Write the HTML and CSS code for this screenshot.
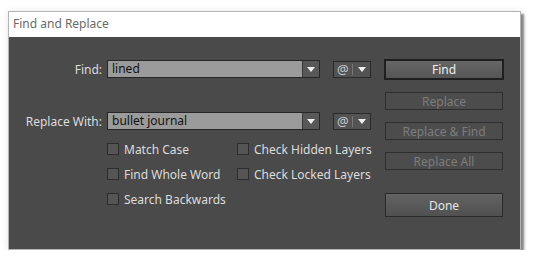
FILE: index.html
```html
<!DOCTYPE html>
<html lang="en">
    <head>
        <title>Find and Replace</title>
        <meta charset="utf-8" />
        <link rel="stylesheet" href="styles.css">
    </head>
    <body>
        <div class="window">
            <div class="titlebar">Find and Replace</div>
            <div class="content">
                <div class="form">
                    <div class="row">
                        <label class="label">Find:</label>
                        <div class="combo">
                            <span class="value">lined</span>
                            <span class="arrow"><i class="tri"></i></span>
                        </div>
                        <div class="special">
                            <span class="at">@</span>
                            <span class="sep"></span>
                            <i class="tri"></i>
                        </div>
                    </div>
                    <div class="row second">
                        <label class="label">Replace With:</label>
                        <div class="combo">
                            <span class="value">bullet journal</span>
                            <span class="arrow"><i class="tri"></i></span>
                        </div>
                        <div class="special">
                            <span class="at">@</span>
                            <span class="sep"></span>
                            <i class="tri"></i>
                        </div>
                    </div>
                    <div class="options">
                        <div class="col">
                            <div class="check"><span class="box"></span>Match Case</div>
                            <div class="check"><span class="box"></span>Find Whole Word</div>
                            <div class="check"><span class="box"></span>Search Backwards</div>
                        </div>
                        <div class="col">
                            <div class="check"><span class="box"></span>Check Hidden Layers</div>
                            <div class="check"><span class="box"></span>Check Locked Layers</div>
                        </div>
                    </div>
                </div>
                <div class="buttons">
                    <button class="btn primary" type="button">Find</button>
                    <button class="btn disabled" type="button">Replace</button>
                    <button class="btn disabled" type="button">Replace &amp; Find</button>
                    <button class="btn disabled" type="button">Replace All</button>
                    <button class="btn done" type="button">Done</button>
                </div>
            </div>
        </div>
    </body>
</html>
```

FILE: styles.css
```css
html, body {
    margin: 0px;
    padding: 0px;
    background: white;
    font-family: "Noto Sans", "Open Sans", sans-serif;
    font-size: 12px;
}
body {
    padding: 11px 0px 0px 8px;
}
.window {
    width: 511px;
    height: 237px;
    border: 1px solid #b4b4b4;
    background: #4a4a4a;
    box-shadow: 3px 3px 2px rgba(0, 0, 0, 0.45), 1px 1px 8px rgba(0, 0, 0, 0.12);
    display: flex;
    flex-direction: column;
}
.titlebar {
    height: 25px;
    line-height: 24px;
    padding-left: 4px;
    background: white;
    color: #6a6a6a;
}
.content {
    flex: 1;
    display: flex;
    justify-content: space-between;
    padding: 22px 16px 0px 0px;
}
.form {
    padding-top: 1px;
}
.row {
    display: flex;
    align-items: center;
    height: 18px;
}
.second {
    margin-top: 34px;
}
.label {
    width: 93px;
    padding-right: 5px;
    text-align: right;
    color: #dcdcdc;
    white-space: nowrap;
}
.combo {
    width: 211px;
    height: 16px;
    display: flex;
    border: 1px solid #262626;
    background: #9b9b9b;
}
.value {
    flex: 1;
    padding-left: 4px;
    line-height: 16px;
    color: #111;
}
.arrow {
    width: 16px;
    border-left: 1px solid #3a3a3a;
    background: #585858;
    display: flex;
    align-items: center;
    justify-content: center;
}
.tri {
    width: 0px;
    height: 0px;
    border-left: 4px solid transparent;
    border-right: 4px solid transparent;
    border-top: 5px solid #f0f0f0;
}
.special {
    margin-left: 13px;
    width: 33px;
    height: 15px;
    display: flex;
    align-items: center;
    border: 1px solid #2a2a2a;
    background: #535353;
    padding: 0px 0px 0px 3px;
}
.at {
    color: #c8c8c8;
    font-size: 13px;
    line-height: 14px;
}
.sep {
    width: 1px;
    height: 11px;
    background: #777;
    margin: 0px 5px 0px 3px;
}
.options {
    display: flex;
    margin: 10px 0px 0px 98px;
}
.col {
    width: 130px;
}
.check {
    display: flex;
    align-items: center;
    height: 18px;
    margin-bottom: 7px;
    color: #dcdcdc;
    white-space: nowrap;
}
.box {
    width: 10px;
    height: 10px;
    border: 1px solid #2c2c2c;
    background: #555;
    margin-right: 5px;
    flex: none;
}
.buttons {
    width: 120px;
    display: flex;
    flex-direction: column;
}
.btn {
    display: block;
    width: 118px;
    margin: 0px 0px 0px 1px;
    padding: 0px;
    font-family: "Noto Sans", "Open Sans", sans-serif;
    font-size: 12px;
    border: 1px solid #2e2e2e;
    background: #4c4c4c;
    color: #7c7c7c;
    height: 18px;
    line-height: 15px;
}
.primary {
    width: 120px;
    margin: 0px;
    height: 21px;
    border: 2px solid #1f1f1f;
    background: linear-gradient(#666, #555);
    color: #f0f0f0;
}
.disabled {
    margin-top: 12px;
}
.done {
    margin-top: 23px;
    height: 24px;
    border-color: #2a2a2a;
    background: linear-gradient(#636363, #505050);
    color: #e6e6e6;
}
```
